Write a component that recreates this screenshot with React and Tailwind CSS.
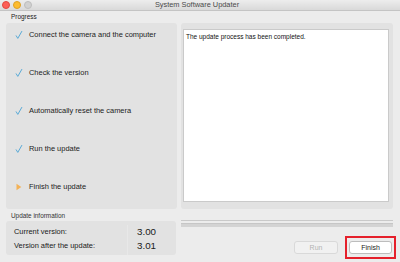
import React from 'react';

const steps = [
    { label: 'Connect the camera and the computer', done: true },
    { label: 'Check the version', done: true },
    { label: 'Automatically reset the camera', done: true },
    { label: 'Run the update', done: true },
    { label: 'Finish the update', done: false },
];

const Check = () => (
    <svg width="8" height="10" viewBox="0 0 8 10" className="shrink-0">
        <path d="M1.2 5.8 L2.8 8.4 L6.8 1.4" fill="none" stroke="#5aaad6" strokeWidth="1" strokeLinecap="round" strokeLinejoin="round" />
    </svg>
);

const Arrow = () => (
    <svg width="8" height="10" viewBox="0 0 8 10" className="shrink-0">
        <path d="M1.5 1.8 L6.3 5 L1.5 8.2 Z" fill="#f3b257" />
    </svg>
);

const App = () => {
    return (
        <div
            className="w-[400px] h-[262px] bg-[#ececec] flex flex-col overflow-hidden text-[#1a1a1a]"
            style={{ fontFamily: '"Liberation Sans", Arial, sans-serif' }}
        >
            {/* title bar */}
            <div className="relative h-[11px] shrink-0 bg-gradient-to-b from-[#ededed] to-[#d9d9d9] border-b border-[#c4c4c4] flex items-center justify-center">
                <div className="absolute left-[2px] top-[1px] flex gap-[3px]">
                    <span className="w-[8px] h-[8px] rounded-full bg-[#fc5f57] border border-[#e2463f]" />
                    <span className="w-[8px] h-[8px] rounded-full bg-[#fdbc2e] border border-[#dea123]" />
                    <span className="w-[8px] h-[8px] rounded-full bg-[#d1d1d1] border border-[#bdbdbd]" />
                </div>
                <span className="text-[7.4px] leading-none text-[#4a4a4a] ml-[-6px]">System Software Updater</span>
            </div>

            <div className="flex pl-[6px] pr-[7px] gap-[4px]">
                {/* left column */}
                <div className="w-[171px] flex flex-col">
                    <div className="h-[12px] flex items-center pl-[5px] text-[6.4px] leading-none text-[#222]">Progress</div>
                    <div className="h-[186px] rounded-[3px] bg-[#e2e2e2] flex flex-col pt-[7px] gap-[28px] pl-[9px]">
                        {steps.map((s) => (
                            <div key={s.label} className="h-[10px] flex items-center gap-[6px]">
                                {s.done ? <Check /> : <Arrow />}
                                <span className="text-[7.45px] leading-none text-[#1c1c1c]">{s.label}</span>
                            </div>
                        ))}
                    </div>
                    <div className="h-[12px] flex items-center pl-[5px] pt-[2px] text-[6.4px] leading-none text-[#333]">Update information</div>
                    <div className="h-[34px] w-[170px] rounded-[3px] bg-[#e2e2e2] flex pt-[4px]">
                        <div className="w-[122px] flex flex-col pl-[8px] border-r border-[#e8e8e8]">
                            <div className="h-[14px] flex items-center text-[7.45px] leading-none">Current version:</div>
                            <div className="h-[14px] flex items-center text-[7.45px] leading-none">Version after the update:</div>
                        </div>
                        <div className="flex flex-col pl-[9px]">
                            <div className="h-[14px] flex items-center text-[9.8px] leading-none">3.00</div>
                            <div className="h-[14px] flex items-center text-[9.8px] leading-none">3.01</div>
                        </div>
                    </div>
                </div>

                {/* right column */}
                <div className="w-[212px] flex flex-col pt-[12px]">
                    <div className="h-[186px] rounded-[3px] bg-[#e2e2e2] pl-[2px] pt-[6px] pr-[4px] pb-[7px] flex">
                        <div className="flex-1 bg-white border border-[#cacaca] px-[2px] pt-[3px] text-[6.5px] leading-tight text-[#111]">
                            The update process has been completed.
                        </div>
                    </div>
                    <div className="mt-[11px] h-px bg-[#c9c9c9]" />
                    <div className="mt-[2px] h-[4px] bg-[#d3d3d3] border-t border-[#c6c6c6]" />
                    <div className="mt-[9px] flex justify-end items-center gap-[7px] mr-[-3px]">
                        <button className="block w-[44px] h-[13px] rounded-[3px] bg-[#f1f1f1] border border-[#d9d9d9] text-[7px] leading-none text-[#b3b3b3]">
                            Run
                        </button>
                        <div className="flex border-2 border-[#e5202b] px-[2px] py-[3px]">
                            <button className="block w-[43px] h-[13px] rounded-[3px] bg-white border border-[#bdbdbd] text-[7px] leading-none text-[#222]">
                                Finish
                            </button>
                        </div>
                    </div>
                </div>
            </div>
        </div>
    );
};

export default App;
